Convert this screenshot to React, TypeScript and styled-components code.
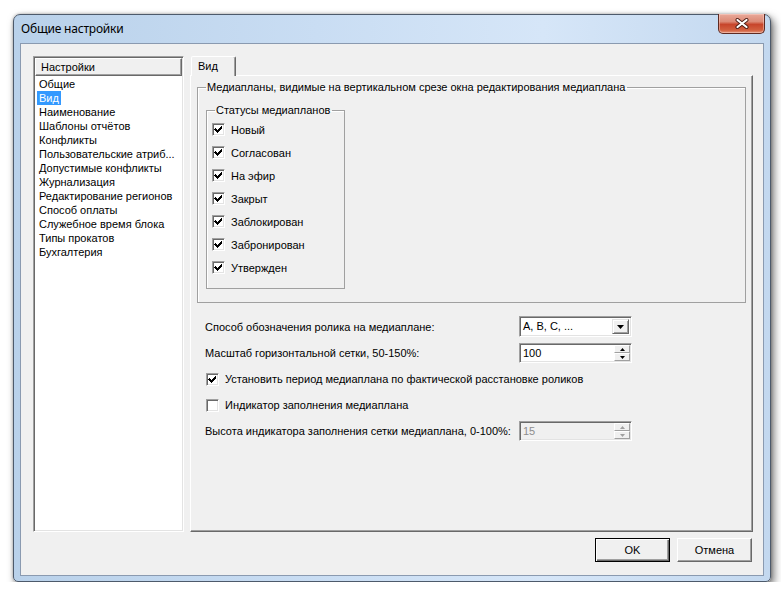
import React from "react";
import styled, { createGlobalStyle } from "styled-components";

const GlobalStyle = createGlobalStyle`
  html, body {
    margin: 0;
    padding: 0;
    background: #ffffff;
  }
  body {
    font-family: "Liberation Sans", Arial, sans-serif;
    font-size: 11px;
    color: #000;
  }
  * {
    box-sizing: border-box;
  }
`;

const sections = [
  "Общие",
  "Вид",
  "Наименование",
  "Шаблоны отчётов",
  "Конфликты",
  "Пользовательские атриб...",
  "Допустимые конфликты",
  "Журнализация",
  "Редактирование регионов",
  "Способ оплаты",
  "Служебное время блока",
  "Типы прокатов",
  "Бухгалтерия",
];

const statuses = [
  "Новый",
  "Согласован",
  "На эфир",
  "Закрыт",
  "Заблокирован",
  "Забронирован",
  "Утвержден",
];

const CheckMark = () => (
  <svg width="9" height="9" viewBox="0 0 9 9" shapeRendering="crispEdges">
    <path
      d="M1 3h1v1h1v1h1v-1h1v-1h1v-1h1v-1h1v3h-1v1h-1v1h-1v1h-1v1h-1v-1h-1v-1h-1v-1h-1z"
      fill="#000"
    />
  </svg>
);

const Check = (props: { checked?: boolean; label: string }) => (
  <CheckRow>
    <CheckBox>{props.checked && <CheckMark />}</CheckBox>
    <span>{props.label}</span>
  </CheckRow>
);

const Arrow = (props: { dir: "up" | "down"; size: number; disabled?: boolean }) => {
  const w = props.size * 2 - 1;
  const h = props.size;
  const pts =
    props.dir === "down"
      ? `0,0 ${w},0 ${w / 2},${h}`
      : `0,${h} ${w},${h} ${w / 2},0`;
  return (
    <svg width={w} height={h} viewBox={`0 0 ${w} ${h}`}>
      <polygon points={pts} fill={props.disabled ? "#a0a0a0" : "#000"} />
    </svg>
  );
};

const Spinner = (props: { value: string; disabled?: boolean }) => (
  <SpinBox $disabled={props.disabled}>
    <SpinText $disabled={props.disabled}>{props.value}</SpinText>
    <SpinButtons>
      <SpinButton>
        <Arrow dir="up" size={3} disabled={props.disabled} />
      </SpinButton>
      <SpinButton>
        <Arrow dir="down" size={3} disabled={props.disabled} />
      </SpinButton>
    </SpinButtons>
  </SpinBox>
);

const App = () => {
  return (
    <>
      <GlobalStyle />
      <Window>
        <TitleBar>
          <Title>Общие настройки</Title>
          <CloseButton>
            <svg width="14" height="11" viewBox="0 0 14 11">
              <path
                d="M2.5 2 L11.5 9 M11.5 2 L2.5 9"
                stroke="#4a1c14"
                strokeWidth="4"
                strokeLinecap="round"
              />
              <path
                d="M2.5 2 L11.5 9 M11.5 2 L2.5 9"
                stroke="#ffffff"
                strokeWidth="2.2"
                strokeLinecap="round"
              />
            </svg>
          </CloseButton>
        </TitleBar>
        <Client>
          <Main>
            <ListBox>
              <ListHeader>Настройки</ListHeader>
              <ListItems>
                {sections.map((s) => (
                  <ListItem key={s} $selected={s === "Вид"}>
                    {s}
                  </ListItem>
                ))}
              </ListItems>
            </ListBox>
            <Tabs>
              <TabStrip>
                <Tab>Вид</Tab>
              </TabStrip>
              <TabPanel>
                <OuterGroup>
                  <Legend>
                    Медиапланы, видимые на вертикальном срезе окна редактирования медиаплана
                  </Legend>
                  <InnerGroup>
                    <InnerLegend>Статусы медиапланов</InnerLegend>
                    {statuses.map((s) => (
                      <StatusRow key={s}>
                        <Check checked label={s} />
                      </StatusRow>
                    ))}
                  </InnerGroup>
                </OuterGroup>
                <LowerForm>
                  <FieldLabel>Способ обозначения ролика на медиаплане:</FieldLabel>
                  <Combo>
                    <ComboText>A, B, C, ...</ComboText>
                    <ComboButton>
                      <Arrow dir="down" size={4} />
                    </ComboButton>
                  </Combo>
                  <FieldLabel>Масштаб горизонтальной сетки, 50-150%:</FieldLabel>
                  <Spinner value="100" />
                  <WideRow>
                    <Check checked label="Установить период медиаплана по фактической расстановке роликов" />
                  </WideRow>
                  <WideRow>
                    <Check label="Индикатор заполнения медиаплана" />
                  </WideRow>
                  <FieldLabel>Высота индикатора заполнения сетки медиаплана, 0-100%:</FieldLabel>
                  <Spinner value="15" disabled />
                </LowerForm>
              </TabPanel>
            </Tabs>
          </Main>
          <ButtonRow>
            <DialogButton $default>OK</DialogButton>
            <DialogButton>Отмена</DialogButton>
          </ButtonRow>
        </Client>
      </Window>
    </>
  );
};

export default App;

const Window = styled.div`
  margin: 14px 0 0 13px;
  width: 758px;
  height: 568px;
  display: flex;
  flex-direction: column;
  padding: 0 6px 5px 6px;
  border: 1px solid #4d5a6b;
  border-radius: 7px 7px 5px 5px;
  background: linear-gradient(to right, #b9d1ea 0%, #c9ddf3 40%, #d6e6f8 70%, #c3d8ef 100%);
  box-shadow: 3px 4px 9px rgba(0, 0, 0, 0.55), 0 0 3px rgba(0, 0, 0, 0.3);
`;

const TitleBar = styled.div`
  height: 28px;
  flex-shrink: 0;
  display: flex;
  align-items: flex-start;
  justify-content: space-between;
`;

const Title = styled.div`
  padding-left: 1px;
  line-height: 28px;
  font-family: "Noto Sans", "Open Sans", sans-serif;
  font-size: 12px;
  letter-spacing: -0.2px;
  color: #000;
`;

const CloseButton = styled.div`
  width: 47px;
  height: 20px;
  margin-top: -1px;
  margin-right: -1px;
  display: flex;
  align-items: center;
  justify-content: center;
  border: 1px solid #5e2a22;
  border-top: none;
  border-radius: 0 0 5px 5px;
  background: linear-gradient(
    to bottom,
    #e9a99a 0%,
    #dc8a76 40%,
    #c7452b 55%,
    #d2603f 85%,
    #e3967c 100%
  );
  box-shadow: inset 0 0 0 1px rgba(255, 220, 210, 0.45);
`;

const Client = styled.div`
  flex: 1;
  display: flex;
  flex-direction: column;
  padding: 12px 10px 13px 12px;
  background: #f0f0f0;
  border: 1px solid #8a9ab0;
`;

const Main = styled.div`
  flex: 1;
  display: flex;
  gap: 6px;
  min-height: 0;
`;

const ListBox = styled.div`
  width: 151px;
  display: flex;
  flex-direction: column;
  padding: 1px;
  background: #fff;
  border: 1px solid;
  border-color: #a0a0a0 #ffffff #ffffff #a0a0a0;
  box-shadow: inset 1px 1px 0 #696969, inset -1px -1px 0 #e3e3e3;
`;

const ListHeader = styled.div`
  height: 18px;
  line-height: 16px;
  padding-left: 5px;
  background: #f0f0f0;
  border: 1px solid;
  border-color: #ffffff #696969 #696969 #ffffff;
  box-shadow: inset -1px -1px 0 #a0a0a0;
`;

const ListItems = styled.div`
  display: flex;
  flex-direction: column;
  align-items: flex-start;
  padding: 1px 0 0 2px;
`;

const ListItem = styled.div<{ $selected?: boolean }>`
  height: 14px;
  line-height: 14px;
  padding: 0 2px;
  white-space: nowrap;
  background: ${(p) => (p.$selected ? "#3399ff" : "transparent")};
  color: ${(p) => (p.$selected ? "#fff" : "#000")};
`;

const Tabs = styled.div`
  width: 563px;
  display: flex;
  flex-direction: column;
`;

const TabStrip = styled.div`
  display: flex;
  padding-left: 1px;
  height: 19px;
  flex-shrink: 0;
`;

const Tab = styled.div`
  width: 45px;
  height: 20px;
  padding-left: 6px;
  line-height: 18px;
  background: #f0f0f0;
  border: 1px solid;
  border-bottom: none;
  border-color: #ffffff #696969 transparent #ffffff;
  box-shadow: inset -1px 0 0 #a0a0a0;
  border-radius: 2px 2px 0 0;
  position: relative;
  z-index: 1;
`;

const TabPanel = styled.div`
  flex: 1;
  display: flex;
  flex-direction: column;
  padding: 5px 6px 0 6px;
  border: 1px solid;
  border-color: #ffffff #696969 #696969 #ffffff;
  box-shadow: inset -1px -1px 0 #a0a0a0;
`;

const OuterGroup = styled.fieldset`
  margin: 0;
  min-width: 0;
  padding: 10px 8px 13px 8px;
  border: 1px solid #a0a0a0;
  box-shadow: inset 1px 1px 0 #ffffff;
`;

const Legend = styled.legend`
  padding: 0 2px 0 1px;
  line-height: 13px;
`;

const InnerGroup = styled.fieldset`
  margin: 0;
  width: 139px;
  min-width: 0;
  padding: 1px 4px 9px 5px;
  border: 1px solid #a0a0a0;
  box-shadow: inset 1px 1px 0 #ffffff;
`;

const InnerLegend = styled.legend`
  margin-left: 3px;
  padding: 0 2px 0 1px;
  line-height: 13px;
`;

const StatusRow = styled.div`
  height: 23px;
  display: flex;
  align-items: center;
`;

const CheckRow = styled.div`
  display: flex;
  align-items: center;
  gap: 6px;
  white-space: nowrap;
`;

const CheckBox = styled.div`
  width: 13px;
  height: 13px;
  flex-shrink: 0;
  display: flex;
  align-items: center;
  justify-content: center;
  background: #fff;
  border: 1px solid;
  border-color: #a0a0a0 #ffffff #ffffff #a0a0a0;
  box-shadow: inset 1px 1px 0 #696969, inset -1px -1px 0 #e3e3e3;
`;

const LowerForm = styled.div`
  margin-top: 13px;
  padding-left: 8px;
  display: grid;
  grid-template-columns: 314px 113px;
  grid-template-rows: 21px 20px 20px 20px 20px;
  row-gap: 6px;
  align-items: center;
`;

const FieldLabel = styled.div`
  white-space: nowrap;
`;

const WideRow = styled.div`
  grid-column: 1 / -1;
  padding-left: 1px;
`;

const Combo = styled.div`
  height: 21px;
  display: flex;
  align-items: stretch;
  background: #fff;
  border: 1px solid;
  border-color: #a0a0a0 #ffffff #ffffff #a0a0a0;
  box-shadow: inset 1px 1px 0 #696969, inset -1px -1px 0 #e3e3e3;
  padding: 2px;
`;

const ComboText = styled.div`
  flex: 1;
  padding-left: 1px;
  line-height: 15px;
`;

const ComboButton = styled.div`
  width: 17px;
  display: flex;
  align-items: center;
  justify-content: center;
  background: #f0f0f0;
  border: 1px solid;
  border-color: #e3e3e3 #696969 #696969 #e3e3e3;
  box-shadow: inset 1px 1px 0 #fff, inset -1px -1px 0 #a0a0a0;
`;

const SpinBox = styled.div<{ $disabled?: boolean }>`
  height: 20px;
  display: flex;
  align-items: stretch;
  background: ${(p) => (p.$disabled ? "#f0f0f0" : "#fff")};
  border: 1px solid;
  border-color: #a0a0a0 #ffffff #ffffff #a0a0a0;
  box-shadow: inset 1px 1px 0 #696969, inset -1px -1px 0 #e3e3e3;
  padding: 1px;
`;

const SpinText = styled.div<{ $disabled?: boolean }>`
  flex: 1;
  padding-left: 2px;
  line-height: 16px;
  color: ${(p) => (p.$disabled ? "#8d8d8d" : "#000")};
`;

const SpinButtons = styled.div`
  width: 16px;
  display: flex;
  flex-direction: column;
`;

const SpinButton = styled.div`
  flex: 1;
  display: flex;
  align-items: center;
  justify-content: center;
  background: #f0f0f0;
  border: 1px solid;
  border-color: #ffffff #a0a0a0 #a0a0a0 #ffffff;
`;

const ButtonRow = styled.div`
  margin-top: 6px;
  display: flex;
  justify-content: flex-end;
  gap: 7px;
  padding-right: 1px;
`;

const DialogButton = styled.div<{ $default?: boolean }>`
  width: 75px;
  height: 24px;
  display: flex;
  align-items: center;
  justify-content: center;
  background: #f0f0f0;
  border: 1px solid;
  border-color: ${(p) =>
    p.$default ? "#000000" : "#ffffff #696969 #696969 #ffffff"};
  box-shadow: ${(p) =>
    p.$default
      ? "inset 1px 1px 0 #ffffff, inset -1px -1px 0 #696969, inset -2px -2px 0 #a0a0a0"
      : "inset -1px -1px 0 #a0a0a0"};
`;
